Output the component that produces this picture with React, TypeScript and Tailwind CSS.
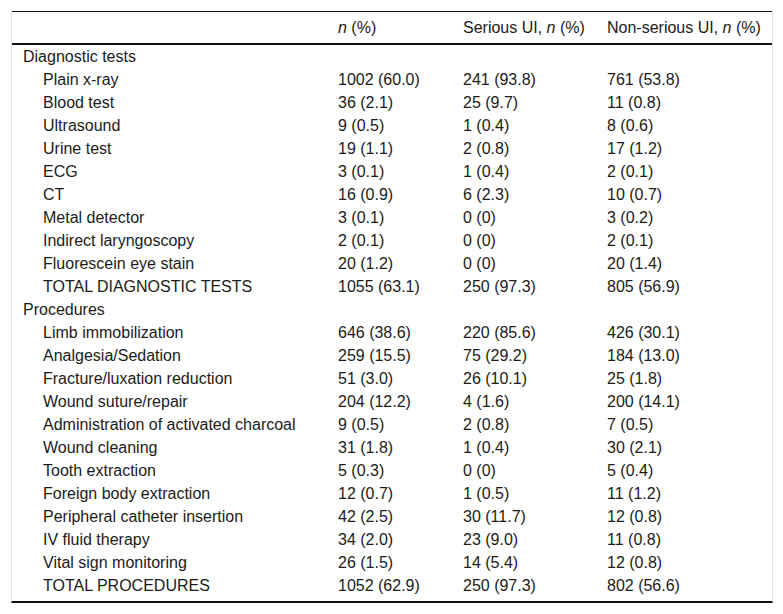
import React from "react";

type Row = { label: string; total: string; serious: string; nonSerious: string };

const diagnostic: Row[] = [
  { label: "Plain x-ray", total: "1002 (60.0)", serious: "241 (93.8)", nonSerious: "761 (53.8)" },
  { label: "Blood test", total: "36 (2.1)", serious: "25 (9.7)", nonSerious: "11 (0.8)" },
  { label: "Ultrasound", total: "9 (0.5)", serious: "1 (0.4)", nonSerious: "8 (0.6)" },
  { label: "Urine test", total: "19 (1.1)", serious: "2 (0.8)", nonSerious: "17 (1.2)" },
  { label: "ECG", total: "3 (0.1)", serious: "1 (0.4)", nonSerious: "2 (0.1)" },
  { label: "CT", total: "16 (0.9)", serious: "6 (2.3)", nonSerious: "10 (0.7)" },
  { label: "Metal detector", total: "3 (0.1)", serious: "0 (0)", nonSerious: "3 (0.2)" },
  { label: "Indirect laryngoscopy", total: "2 (0.1)", serious: "0 (0)", nonSerious: "2 (0.1)" },
  { label: "Fluorescein eye stain", total: "20 (1.2)", serious: "0 (0)", nonSerious: "20 (1.4)" },
  { label: "TOTAL DIAGNOSTIC TESTS", total: "1055 (63.1)", serious: "250 (97.3)", nonSerious: "805 (56.9)" },
];

const procedures: Row[] = [
  { label: "Limb immobilization", total: "646 (38.6)", serious: "220 (85.6)", nonSerious: "426 (30.1)" },
  { label: "Analgesia/Sedation", total: "259 (15.5)", serious: "75 (29.2)", nonSerious: "184 (13.0)" },
  { label: "Fracture/luxation reduction", total: "51 (3.0)", serious: "26 (10.1)", nonSerious: "25 (1.8)" },
  { label: "Wound suture/repair", total: "204 (12.2)", serious: "4 (1.6)", nonSerious: "200 (14.1)" },
  { label: "Administration of activated charcoal", total: "9 (0.5)", serious: "2 (0.8)", nonSerious: "7 (0.5)" },
  { label: "Wound cleaning", total: "31 (1.8)", serious: "1 (0.4)", nonSerious: "30 (2.1)" },
  { label: "Tooth extraction", total: "5 (0.3)", serious: "0 (0)", nonSerious: "5 (0.4)" },
  { label: "Foreign body extraction", total: "12 (0.7)", serious: "1 (0.5)", nonSerious: "11 (1.2)" },
  { label: "Peripheral catheter insertion", total: "42 (2.5)", serious: "30 (11.7)", nonSerious: "12 (0.8)" },
  { label: "IV fluid therapy", total: "34 (2.0)", serious: "23 (9.0)", nonSerious: "11 (0.8)" },
  { label: "Vital sign monitoring", total: "26 (1.5)", serious: "14 (5.4)", nonSerious: "12 (0.8)" },
  { label: "TOTAL PROCEDURES", total: "1052 (62.9)", serious: "250 (97.3)", nonSerious: "802 (56.6)" },
];

const cell = "px-[11px] h-[23px] p-0 align-middle whitespace-nowrap";

const Section = ({ title, rows }: { title: string; rows: Row[] }) => (
  <>
    <tr>
      <td className={`${cell} pl-[11px]`} colSpan={4}>{title}</td>
    </tr>
    {rows.map((r) => (
      <tr key={r.label}>
        <td className={`${cell} pl-[31px]`}>{r.label}</td>
        <td className={cell}>{r.total}</td>
        <td className={cell}>{r.serious}</td>
        <td className={cell}>{r.nonSerious}</td>
      </tr>
    ))}
  </>
);

export default function App() {
  return (
    <div className="w-[783px] h-[614px] bg-white pt-[11px] pl-[11px] font-['Liberation_Sans',Arial,sans-serif] text-[16px] leading-[23px] text-[#1b1b1b]">
      <div className="w-[762px] border-x border-[#e6e6e6] pb-[4px] border-b-2 border-b-[#111]">
        <table className="w-full table-fixed border-collapse">
          <colgroup>
            <col className="w-[315px]" />
            <col className="w-[125px]" />
            <col className="w-[144px]" />
            <col />
          </colgroup>
          <thead>
            <tr className="border-t border-[#111] border-b-2 border-b-[#111]">
              <th className={`${cell} h-[32px] font-normal text-left`} />
              <th className={`${cell} h-[32px] font-normal text-left`}>
                <i>n</i> (%)
              </th>
              <th className={`${cell} h-[32px] font-normal text-left`}>
                Serious UI, <i>n</i> (%)
              </th>
              <th className={`${cell} h-[32px] font-normal text-left`}>
                Non-serious UI, <i>n</i> (%)
              </th>
            </tr>
          </thead>
          <tbody>
            <Section title="Diagnostic tests" rows={diagnostic} />
            <Section title="Procedures" rows={procedures} />
          </tbody>
        </table>
      </div>
    </div>
  );
}
